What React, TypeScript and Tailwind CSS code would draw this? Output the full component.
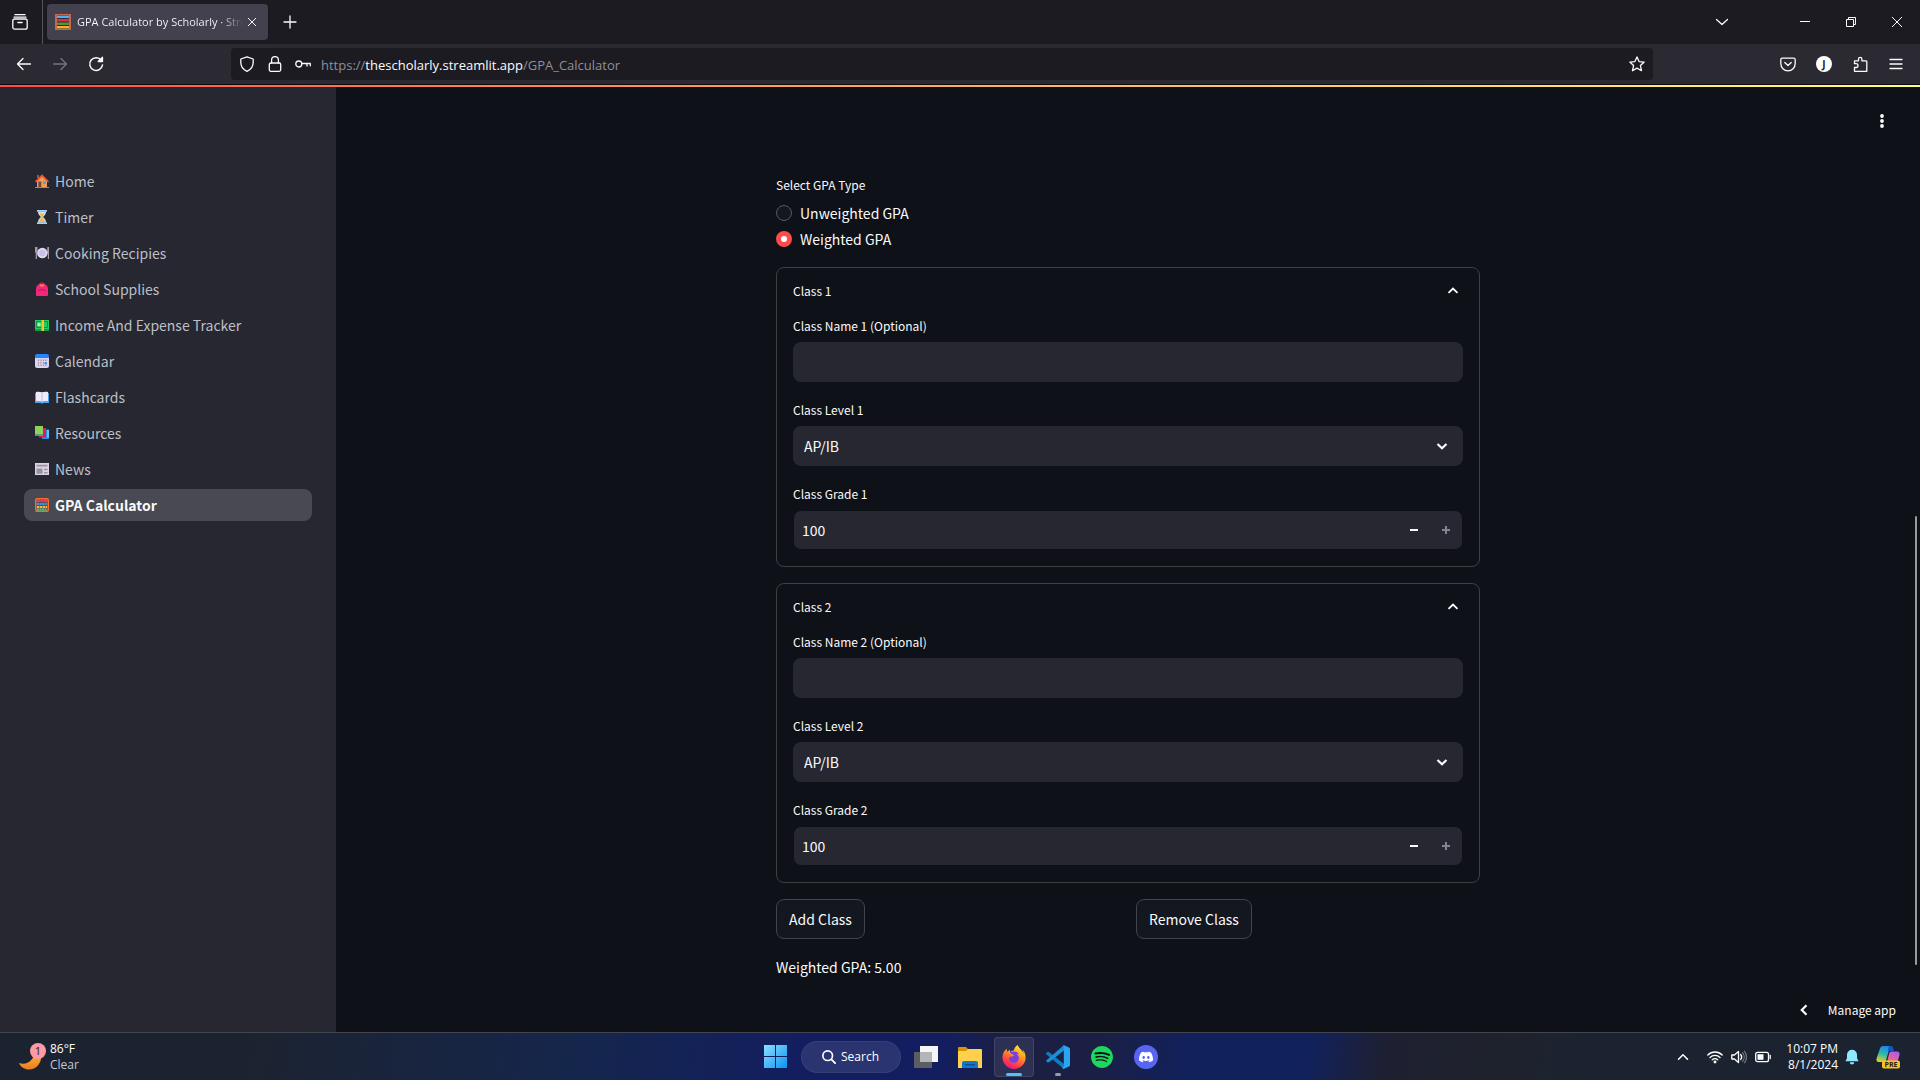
import * as React from "react"
import { SiDiscord, SiFirefoxbrowser, SiSpotify } from "react-icons/si"

type Page = { name: string; slug: string; icon: React.ReactNode }

const pages: Page[] = [
	{
		name: "Home",
		slug: "/",
		icon: (
			<>
				<path d="M2 1h2v3H2z" fill="#8a5a44" />
				<path d="M2 6.500 7 2l5 4.500V13H2z" fill="#e8a05c" />
				<path d="M0 7.300 7 .3l7 7-1 1.100L7 3 1 8.400z" fill="#f4552f" />
				<path d="M3.300 7.500h3V13h-3z" fill="#7d4533" />
				<path d="M8 7.300h3v2.700H8z" fill="#3fa9f5" />
				<path d="M0 13h14v1H0z" fill="#3fbf62" />
			</>
		),
	},
	{
		name: "Timer",
		slug: "/Timer",
		icon: (
			<>
				<path d="M3 1.500h8c0 3-1.500 4-3 5.500 1.500 1.500 3 2.500 3 5.500H3c0-3 1.500-4 3-5.500C4.500 5.500 3 4.500 3 1.500" fill="#c9e4f5" />
				<path d="M4.500 3.500h5C9 5 8 5.500 7.500 7c.5 1.500 2.300 2.500 2.500 5H4c.2-2.500 2-3.500 2.500-5C6 5.500 5 5 4.500 3.500" fill="#fbb64b" />
				<path d="M2 0h10v1.800H2zM2 12.200h10V14H2z" fill="#a9cfea" />
			</>
		),
	},
	{
		name: "Cooking Recipies",
		slug: "/Cooking_Recipies",
		icon: (
			<>
				<path d="M0 1h2.500v5L2 7v6H.7V7L0 6zM12.300 1H14v12h-1.200V8h-.8z" fill="#a39aa9" />
				<circle cx="7.300" cy="7" r="5.200" fill="#e1d8ee" />
				<circle cx="7.300" cy="7" r="3.300" fill="#cdc0ec" />
			</>
		),
	},
	{
		name: "School Supplies",
		slug: "/School_Supplies",
		icon: (
			<>
				<path d="M5 2C5-.2 9-.2 9 2" fill="none" stroke="#c21858" />
				<path d="M1 7.500C1 4 3 1.500 7 1.500s6 2.500 6 6V13a1 1 0 0 1-1 1H2a1 1 0 0 1-1-1z" fill="#f4267c" />
				<path d="M4.500 2.500h5L8.500 4.500h-3z" fill="#f8932c" />
				<path d="M3 9c2-1.800 6-1.800 8 0" fill="none" stroke="#b81457" />
			</>
		),
	},
	{
		name: "Income And Expense Tracker",
		slug: "/Income_And_Expense_Tracker",
		icon: (
			<>
				<path d="M0 2h14v11H0z" fill="#169a46" />
				<path d="M0 2h14v9H0z" fill="#25cb5e" />
				<path d="M1.500 3.500h11v6h-11z" fill="none" stroke="#139147" />
				<circle cx="4" cy="6.500" r="1.800" fill="#b8e8c4" />
				<path d="M6.500 2h2.500v11H6.500z" fill="#fbc22d" />
			</>
		),
	},
	{
		name: "Calendar",
		slug: "/Calendar",
		icon: (
			<>
				<path d="M0 3h14v9a2 2 0 0 1-2 2H2a2 2 0 0 1-2-2z" fill="#ded3ed" />
				<path d="M2 0h10a2 2 0 0 1 2 2v2H0V2a2 2 0 0 1 2-2" fill="#2583fb" />
				<path d="M3.500 5.500v7M6 5.500v7M8.500 5.500v7M11 5.500v7" stroke="#9c8fac" strokeWidth="1.200" strokeDasharray="1.500 1" />
				<path d="M9.500 8.300h2.300v2H9.500z" fill="#218cf4" />
			</>
		),
	},
	{
		name: "Flashcards",
		slug: "/Flashcards",
		icon: (
			<>
				<path d="M0 3h14v10H8.500L7 13.800 5.500 13H0z" fill="#4ba5e8" />
				<path d="M1 2c2-.5 4-.3 6 .3 2-.6 4-.8 6-.3v9.300c-2-.5-4-.3-6 .3-2-.6-4-.8-6-.3z" fill="#f0eafa" />
				<path d="M7 2.300v9.300" stroke="#c8bedd" />
			</>
		),
	},
	{
		name: "Resources",
		slug: "/Resources",
		icon: (
			<>
				<path d="M6 3.500h8V13H7z" fill="#2b8be8" />
				<path d="M12 4h2v7.500h-2z" fill="#5bc5ff" />
				<path d="M3 2h8v9.500H4z" fill="#d72250" />
				<path d="M0 0h8v9.500H0z" fill="#8cd459" />
				<path d="M0 8h8v1.700H0z" fill="#56a27b" />
			</>
		),
	},
	{
		name: "News",
		slug: "/News",
		icon: (
			<>
				<path d="M0 1h14v12H0z" fill="#dcd3e2" />
				<path d="M1.500 2.800h11v1.700h-11zM1.500 6.500h6v5.300h-6zM9 6.800h3.500v1.400H9zM9 10h3.500v1.400H9z" fill="#9a919f" />
			</>
		),
	},
	{
		name: "GPA Calculator",
		slug: "/GPA_Calculator",
		icon: (
			<>
				<rect x=".7" y=".7" width="12.600" height="12.600" rx="1.300" fill="#57505c" stroke="#f1702f" strokeWidth="1.400" />
				<path d="M2 3h10" stroke="#f0395f" strokeWidth="2" strokeDasharray="3 .5" />
				<path d="M2 6h10" stroke="#3b99f4" strokeWidth="2" strokeDasharray="2 .5" />
				<path d="M2 9h10" stroke="#fbb62d" strokeWidth="2" strokeDasharray="2.500 .5" />
				<path d="M2 11.500h10" stroke="#3fd072" strokeWidth="2" strokeDasharray="2 .5" />
			</>
		),
	},
]

type IconProps = {
	className?: string
	children: React.ReactNode
}

function Icon({ className = "size-4", children }: IconProps) {
	return (
		<svg
			viewBox="0 0 16 16"
			fill="none"
			stroke="currentColor"
			strokeWidth="1.3"
			strokeLinecap="round"
			strokeLinejoin="round"
			aria-hidden="true"
			className={`shrink-0 ${className}`}
		>
			{children}
		</svg>
	)
}

function TabStrip() {
	return (
		<div className="flex h-11 items-center bg-[#1c1b22] text-[#fbfbfe]">
			<button aria-label="Firefox View" className="flex h-full w-[43px] items-center border-r border-[#54535c] pl-3">
				<Icon className="size-4">
					<path d="M3 .7h10M2 3.200h12" />
					<rect x=".8" y="5" width="14.400" height="10.200" rx="2" />
					<path d="M6 8.500h4" strokeWidth="1.600" />
				</Icon>
			</button>
			<div className="ml-1 flex h-9 w-[221px] items-center rounded bg-[#42414d] pr-2 pl-2 shadow-sm">
				<svg viewBox="0 0 16 16" className="size-4 shrink-0" aria-hidden="true">
					<path d="M0 0h16v16H0z" fill="#c1694f" />
					<path d="M2 1h12v14H2z" fill="#292f33" />
					<path d="M2 1.500h12v2.500H2z" fill="#55acee" />
					<path d="M2 5h12v2.500H2z" fill="#dd2e44" />
					<path d="M2 8.500h12V11H2z" fill="#5c913b" />
					<path d="M2 12h12v2.500H2z" fill="#ffac33" />
				</svg>
				<span className="ml-1.5 min-w-0 flex-1 overflow-hidden bg-linear-to-r from-[#fbfbfe] from-86% to-[#42414d] bg-clip-text font-['Open_Sans',sans-serif] text-[11px] whitespace-nowrap text-transparent">
					GPA Calculator by Scholarly · Streamlit
				</span>
				<button aria-label="Close tab" className="flex w-4 justify-center">
					<Icon className="size-3">
						<path d="m3 3 10 10M13 3 3 13" />
					</Icon>
				</button>
			</div>
			<button aria-label="New tab" className="ml-[14px] flex w-4 justify-center">
				<Icon className="size-4">
					<path d="M8 2v12M2 8h12" />
				</Icon>
			</button>
			<button aria-label="List all tabs" className="mr-[52px] ml-auto flex w-4 justify-center">
				<Icon className="size-4">
					<path d="m2.500 5.500 5.500 5 5.500-5" />
				</Icon>
			</button>
			<button aria-label="Minimize" className="flex h-full w-[46px] items-center justify-center">
				<svg viewBox="0 0 10 10" className="size-2.5" stroke="currentColor" aria-hidden="true">
					<path d="M0 4.500h10" />
				</svg>
			</button>
			<button aria-label="Restore" className="flex h-full w-[46px] items-center justify-center">
				<svg viewBox="0 0 10 10" className="size-2.5" fill="none" stroke="currentColor" aria-hidden="true">
					<path d="M.5 2.500h7v7h-7zM2.500 2.500v-2h7v7h-2" />
				</svg>
			</button>
			<button aria-label="Close" className="flex h-full w-[46px] items-center justify-center">
				<svg viewBox="0 0 10 10" className="size-2.5" stroke="currentColor" aria-hidden="true">
					<path d="m0 0 10 10M10 0 0 10" />
				</svg>
			</button>
		</div>
	)
}

function NavBar() {
	return (
		<div className="flex h-[41px] items-center border-b border-[#0c0c0d] bg-[#2b2a33] pl-4 text-[#fbfbfe]">
			<div className="flex items-center gap-5">
				<button aria-label="Back">
					<Icon>
						<path d="M14.500 8H1.500M7 2.500 1.500 8 7 13.500" />
					</Icon>
				</button>
				<button aria-label="Forward" disabled className="text-[#76757e]">
					<Icon>
						<path d="M1.500 8h13M9 2.500 14.500 8 9 13.500" />
					</Icon>
				</button>
				<button aria-label="Reload">
					<Icon>
						<path d="M13.300 4.200A6.400 6.400 0 1 0 14.500 9" strokeWidth="1.500" />
						<path d="M14.500 1.200v4.300h-4.300z" fill="currentColor" />
					</Icon>
				</button>
			</div>

			<div className="ml-[127px] flex h-8 flex-1 items-center rounded bg-[#1c1b22] pr-2 pl-2">
				<Icon>
					<path d="M8 .8 14.200 3v3.500c0 4-2.200 7-6.200 8.800-4-1.800-6.200-4.800-6.200-8.800V3z" />
				</Icon>
				<Icon className="ml-3 size-4">
					<rect x="2.300" y="7" width="11.400" height="8.300" rx="1.500" />
					<path d="M4.600 7V4a3.400 3.400 0 0 1 6.800 0v3" />
				</Icon>
				<Icon className="ml-3 size-4">
					<circle cx="3.800" cy="8" r="3" />
					<path d="M7 7.500h8.300v2.300M12 7.500V10" />
				</Icon>
				<div
					role="textbox"
					aria-label="Address"
					className="ml-2.5 flex-1 pt-0.5 font-['Open_Sans',sans-serif] text-[13px] text-[#8f8f96]"
				>
					https://<span className="text-[#fbfbfe]">thescholarly.streamlit.app</span>/GPA_Calculator
				</div>
				<button aria-label="Bookmark this page">
					<Icon>
						<path d="m8 .9 2.100 4.700 5.100.5-3.800 3.500 1.100 5.100L8 12.100l-4.500 2.600 1.100-5.100L.8 6.100l5.100-.5z" />
					</Icon>
				</button>
			</div>

			<div className="mr-4 ml-[127px] flex items-center gap-5">
				<button aria-label="Save to Pocket">
					<Icon>
						<path d="M2.200 2.200h11.600a1.400 1.400 0 0 1 1.400 1.400v4a7.200 7.200 0 0 1-14.400 0v-4a1.400 1.400 0 0 1 1.400-1.400" />
						<path d="M4.800 6.500 8 9.500l3.200-3" />
					</Icon>
				</button>
				<button
					aria-label="Account"
					className="flex size-4 items-center justify-center rounded-full bg-white font-['Open_Sans',sans-serif] text-[10px] leading-4 font-bold text-[#1c1b22]"
				>
					J
				</button>
				<button aria-label="Extensions">
					<Icon>
						<path d="M2.500 15.300v-3.800h1.600a1.900 1.900 0 0 0 0-3.800H2.500V4.800h4V3a1.700 1.700 0 0 1 3.400 0v1.800h4a.9.9 0 0 1 .9.900v9.600z" />
					</Icon>
				</button>
				<button aria-label="Open application menu">
					<Icon>
						<path d="M2 3.500h12M2 8h12M2 12.500h12" />
					</Icon>
				</button>
			</div>
		</div>
	)
}

function Sidebar() {
	return (
		<nav aria-label="Pages" className="w-84 shrink-0 bg-[#262730] px-6 pt-20">
			<ul className="space-y-1">
				{pages.map((page) => {
					const active = page.name === "GPA Calculator"
					return (
						<li key={page.slug}>
							<a
								href={page.slug}
								aria-current={active ? "page" : undefined}
								className={
									active
										? "flex h-8 items-center gap-1.5 rounded-lg bg-[#484953] px-[11px] font-bold text-[#fafafa]"
										: "flex h-8 items-center gap-1.5 rounded-lg px-[11px] text-[#bcbfc9]"
								}
							>
								<svg viewBox="0 0 14 14" className="size-3.5 shrink-0" aria-hidden="true">
									{page.icon}
								</svg>
								{page.name}
							</a>
						</li>
					)
				})}
			</ul>
		</nav>
	)
}

function Field({ id, label, children }: { id: string; label: string; children: React.ReactNode }) {
	return (
		<div>
			<label htmlFor={id} className="mb-1 flex h-6 items-center text-xs">
				{label}
			</label>
			{children}
		</div>
	)
}

function ClassCard({ n }: { n: number }) {
	const [open, setOpen] = React.useState(true)
	const [grade, setGrade] = React.useState(100)

	return (
		<section className="rounded-lg border border-[#3d4044] px-4">
			<button
				aria-expanded={open}
				onClick={() => setOpen(!open)}
				className="flex h-[46px] w-full items-center justify-between text-xs"
			>
				Class {n}
				<Icon className="mr-0.5 size-4">
					<path d="M3.500 9.800 8 5.500l4.500 4.300" strokeWidth="1.800" strokeLinecap="butt" strokeLinejoin="miter" />
				</Icon>
			</button>
			{open && (
				<div className="space-y-4 pb-4">
					<Field id={`name-${n}`} label={`Class Name ${n} (Optional)`}>
						<input
							id={`name-${n}`}
							type="text"
							className="block h-10 w-full rounded-lg bg-[#262730] px-2.5 outline-none"
						/>
					</Field>
					<Field id={`level-${n}`} label={`Class Level ${n}`}>
						<div className="relative">
							<select
								id={`level-${n}`}
								defaultValue="AP/IB"
								className="block h-10 w-full appearance-none rounded-lg bg-[#262730] px-[11px] outline-none"
							>
								<option>AP/IB</option>
								<option>Honors</option>
								<option>Regular</option>
							</select>
							<Icon className="pointer-events-none absolute top-3 right-[13px] size-4">
								<path d="M3.500 6 8 10.300 12.500 6" strokeWidth="2.200" strokeLinecap="butt" strokeLinejoin="miter" />
							</Icon>
						</div>
					</Field>
					<Field id={`grade-${n}`} label={`Class Grade ${n}`}>
						<div className="flex h-10 overflow-hidden rounded-lg border border-transparent bg-[#262730] bg-clip-padding">
							<input
								id={`grade-${n}`}
								type="number"
								value={grade}
								onChange={(e) => setGrade(Number(e.currentTarget.value))}
								className="min-w-0 flex-1 appearance-none px-2 outline-none [appearance:textfield]"
							/>
							<button
								aria-label="Decrease"
								onClick={() => setGrade(grade - 1)}
								className="flex w-8 items-center justify-center"
							>
								<svg viewBox="0 0 8 8" className="size-2" stroke="currentColor" strokeWidth="2" aria-hidden="true">
									<path d="M0 4h8" />
								</svg>
							</button>
							<button
								aria-label="Increase"
								disabled={grade >= 100}
								onClick={() => setGrade(grade + 1)}
								className="flex w-8 items-center justify-center disabled:text-[#808495]"
							>
								<svg viewBox="0 0 8 8" className="size-2" stroke="currentColor" strokeWidth="2" aria-hidden="true">
									<path d="M0 4h8M4 0v8" />
								</svg>
							</button>
						</div>
					</Field>
				</div>
			)}
		</section>
	)
}

function Calculator() {
	return (
		<main className="relative min-w-0 flex-1">
			<div className="mx-auto w-full max-w-[704px] pt-22">
				<fieldset>
					<legend className="flex h-6 items-center text-xs">Select GPA Type</legend>
					<div className="mt-1 flex flex-col gap-0.5">
						{["Unweighted GPA", "Weighted GPA"].map((type) => (
							<label key={type} className="flex h-6 items-center gap-2">
								<input
									type="radio"
									name="gpa-type"
									defaultChecked={type === "Weighted GPA"}
									className="size-4 appearance-none rounded-full border border-[#565960] bg-[#131720] checked:border-5 checked:border-[#ff4b4b] checked:bg-white"
								/>
								{type}
							</label>
						))}
					</div>
				</fieldset>

				<div className="mt-4 space-y-4">
					<ClassCard n={1} />
					<ClassCard n={2} />
				</div>

				<div className="mt-4 grid grid-cols-2 gap-4">
					<div>
						<button className="h-10 rounded-lg border border-[#41444c] bg-[#131720] px-3">Add Class</button>
					</div>
					<div>
						<button className="h-10 rounded-lg border border-[#41444c] bg-[#131720] px-3">Remove Class</button>
					</div>
				</div>

				<p className="mt-4 leading-6">Weighted GPA: 5.00</p>
			</div>

			<button aria-label="Main menu" className="absolute top-7 right-[30px]">
				<svg viewBox="0 0 16 16" className="size-4" fill="currentColor" aria-hidden="true">
					<circle cx="8" cy="3" r="1.900" />
					<circle cx="8" cy="8" r="1.900" />
					<circle cx="8" cy="13" r="1.900" />
				</svg>
			</button>
			<button className="absolute right-6 bottom-2.5 flex items-center gap-4 text-xs leading-6">
				<Icon className="size-4">
					<path d="M10.500 3.300 5.800 8l4.700 4.700" strokeWidth="2.200" strokeLinecap="butt" strokeLinejoin="miter" />
				</Icon>
				Manage app
			</button>
			<div className="absolute right-[3px] bottom-[67px] h-[449px] w-0.5 rounded-full bg-[#9a9b9f]" />
		</main>
	)
}

function TaskButton({
	label,
	active,
	running,
	children,
}: {
	label: string
	active?: boolean
	running?: boolean
	children: React.ReactNode
}) {
	return (
		<button
			aria-label={label}
			className={
				active
					? "relative flex size-10 items-center justify-center rounded border border-white/10 bg-white/8"
					: "relative flex size-10 items-center justify-center"
			}
		>
			{children}
			{active && <span className="absolute bottom-0 h-[3px] w-4 rounded-full bg-[#4cc2ff]" />}
			{running && <span className="absolute bottom-px h-[3px] w-1.5 rounded-full bg-[#9a9da8]" />}
		</button>
	)
}

function Taskbar() {
	return (
		<footer className="grid h-12 grid-cols-[1fr_auto_1fr] items-center border-t border-[#42454d] bg-[linear-gradient(100deg,#1c2330_13%,#15264c_30%,#121e60_42%,#121e60_49%,#1b1f44_52%,#1b1f44_57%,#11215c_62%,#11215c_68%,#1e2032_72%,#1e222c_77%,#1c2330_82%)] font-['Open_Sans',sans-serif] text-xs text-white">
			<button className="flex items-center gap-1 pl-[19px] text-left">
				<svg viewBox="0 0 27 28" className="h-7 w-[27px]" aria-hidden="true">
					<defs>
						<linearGradient id="moon" x1="0" y1="0" x2="0" y2="1">
							<stop offset="0" stopColor="#fbc53a" />
							<stop offset="1" stopColor="#ee7b20" />
						</linearGradient>
					</defs>
					<path d="M16 6c6 2 8 9 4 15-5 8-17 7-20-1 8 3 16-3 16-14" fill="url(#moon)" />
					<circle cx="19" cy="8" r="8" fill="#ff99a4" />
					<text x="19" y="12" textAnchor="middle" fontSize="11" fill="#1a1a1a">
						1
					</text>
				</svg>
				<span className="leading-4">
					<span className="block">86°F</span>
					<span className="block text-[#c5c8cd]">Clear</span>
				</span>
			</button>

			<div className="flex items-center gap-1 pl-px">
				<TaskButton label="Start">
					<svg viewBox="0 0 23 23" className="size-[23px]" aria-hidden="true">
						<defs>
							<linearGradient id="win" x1="0" y1="0" x2="1" y2="1">
								<stop offset="0" stopColor="#8be0ff" />
								<stop offset="1" stopColor="#0a94f5" />
							</linearGradient>
						</defs>
						<path d="M0 0h11v11H0zM12 0h11v11H12zM0 12h11v11H0zM12 12h11v11H12z" fill="url(#win)" />
					</svg>
				</TaskButton>
				<button className="mx-px flex h-8 w-25 items-center justify-center gap-[5px] rounded-full border border-white/5 bg-white/10">
					<Icon className="size-3.5">
						<circle cx="6.500" cy="6.500" r="5.500" strokeWidth="1.900" />
						<path d="m10.700 10.700 4.300 4.300" strokeWidth="2.100" />
					</Icon>
					Search
				</button>
				<TaskButton label="Task view">
					<svg viewBox="0 0 24 24" className="size-6" aria-hidden="true">
						<path d="M0 7h18v16H0z" fill="#5c5d60" />
						<path d="M6 1h18v16H6z" fill="#f5f5f6" />
						<path d="M6 7h12v10H6z" fill="#b4b5b8" />
					</svg>
				</TaskButton>
				<TaskButton label="File Explorer">
					<svg viewBox="0 0 24 24" className="size-6" aria-hidden="true">
						<path d="M0 3a1 1 0 0 1 1-1h7l2 2v4H0z" fill="#d99200" />
						<path d="M0 6h8l2-2h13a1 1 0 0 1 1 1v18H0z" fill="#ffd04c" />
						<path d="M4 23v-5a2 2 0 0 1 2-2h12a2 2 0 0 1 2 2v5z" fill="#1277cc" />
						<path d="M7 19h10v1.500H7z" fill="#0b5196" />
					</svg>
				</TaskButton>
				<TaskButton label="Firefox" active>
					<svg width="0" height="0" className="absolute" aria-hidden="true">
						<defs>
							<linearGradient id="fox" x1="0.8" y1="0" x2="0.3" y2="1">
								<stop offset="0" stopColor="#fff13a" />
								<stop offset="0.4" stopColor="#ff9a1f" />
								<stop offset="0.750" stopColor="#ff3d4b" />
								<stop offset="1" stopColor="#e3148c" />
							</linearGradient>
						</defs>
					</svg>
					<span className="flex size-6 items-center justify-center rounded-full bg-[radial-gradient(circle,#7a3fe0_35%,transparent_45%)]">
						<SiFirefoxbrowser className="size-6" style={{ fill: "url(#fox)" }} />
					</span>
				</TaskButton>
				<TaskButton label="Visual Studio Code" running>
					<svg viewBox="0 0 24 24" className="size-6" aria-hidden="true">
						<path d="M0 8.300 1.700 6.800 3 7l15 12v5L.2 9.200z" fill="#0b7cc4" />
						<path d="M0 15.700 18 0v5.500L3 17.200l-1.300.2L0 16z" fill="#1b8fd8" />
						<path d="M17.500 0 23 2.500a2 2 0 0 1 1 1.600v15.800a2 2 0 0 1-1 1.600L17.500 24c-.8-.2-1-.8-1-1.500l1.300-1V3z" fill="#2aa5f2" />
					</svg>
				</TaskButton>
				<TaskButton label="Spotify">
					<span className="rounded-full bg-[#121212]">
						<SiSpotify className="size-[22px] text-[#1ed760]" />
					</span>
				</TaskButton>
				<TaskButton label="Discord">
					<span className="flex size-6 items-center justify-center rounded-full bg-[#5865f2]">
						<SiDiscord className="size-3.5" />
					</span>
				</TaskButton>
			</div>

			<div className="flex items-center justify-end pr-5">
				<button aria-label="Show hidden icons">
					<Icon className="size-4">
						<path d="m3.500 10.300 4.500-4.500 4.500 4.500" strokeWidth="1.500" />
					</Icon>
				</button>
				<button aria-label="Network, volume and battery" className="ml-4 flex gap-2">
					<Icon>
						<path d="M.8 6a10.200 10.200 0 0 1 14.400 0M3 8.500a7 7 0 0 1 10 0M5.200 10.900a4 4 0 0 1 5.600 0" />
						<circle cx="8" cy="13" r=".8" fill="currentColor" />
					</Icon>
					<Icon>
						<path d="M.8 6v4h2.600L7.500 13.500v-11L3.400 6zM9.700 5.500a4 4 0 0 1 0 5" />
						<path d="M11.600 3.800a6.300 6.300 0 0 1 0 8.400M13.500 2.300a9 9 0 0 1 0 11.400" stroke="#6d727c" />
					</Icon>
					<Icon>
						<rect x=".7" y="3.300" width="12.800" height="9.400" rx="2" />
						<path d="M2.500 5.200h6v5.600h-6z" fill="currentColor" stroke="none" />
						<path d="M15.200 6.500v3" />
					</Icon>
				</button>
				<button className="ml-[15px] text-right leading-4">
					<span className="block">10:07 PM</span>
					<span className="block">8/1/2024</span>
				</button>
				<button aria-label="Notifications" className="ml-1.5">
					<svg viewBox="0 0 16 16" className="size-4" fill="#8fe6ff" aria-hidden="true">
						<path d="M8 .8a5 5 0 0 1 5 5v3.500l1.700 2.900H1.300L3 9.300V5.800a5 5 0 0 1 5-5M5.800 13.200h4.400a2.200 2.200 0 0 1-4.400 0" />
					</svg>
				</button>
				<button aria-label="Copilot" className="ml-4">
					<svg viewBox="0 0 24 24" className="size-6" aria-hidden="true">
						<defs>
							<linearGradient id="copilot-a" x1="0.5" y1="0" x2="0.2" y2="1">
								<stop offset="0" stopColor="#1b86e8" />
								<stop offset="0.5" stopColor="#2fb9a9" />
								<stop offset="1" stopColor="#f2d11c" />
							</linearGradient>
							<linearGradient id="copilot-b" x1="0.8" y1="0" x2="0.2" y2="1">
								<stop offset="0" stopColor="#a45cf0" />
								<stop offset="1" stopColor="#fb6a80" />
							</linearGradient>
						</defs>
						<path d="M7 1h7c2 0 3 1.500 3.500 4H13l-3.500 12H3c-2.500 0-3-2-2.300-4L4 3.500C4.500 2 5.500 1 7 1" fill="url(#copilot-a)" />
						<path d="M14 1c2 0 3 1.500 3.500 5H12c.5-3 .5-5 2-5" fill="#1454c8" />
						<path d="M15.500 6.500H21c2.500 0 3 2 2.400 4l-2 6.500H11l2-8c.4-1.700 1-2.500 2.500-2.500" fill="url(#copilot-b)" />
						<rect x="6" y="15.500" width="18" height="8" rx="2" fill="#fcc419" />
						<text x="15" y="22.200" textAnchor="middle" fontSize="7" fontWeight="700" fill="#222">
							PRE
						</text>
					</svg>
				</button>
			</div>
		</footer>
	)
}

export default function App() {
	return (
		<div className="flex min-h-screen flex-col bg-[#0e1117] font-['Noto_Sans_CJK_SC',sans-serif] text-sm text-[#fafafa]">
			<header>
				<TabStrip />
				<NavBar />
			</header>
			<div className="relative flex flex-1">
				<div className="absolute inset-x-0 top-0 z-10 h-0.5 bg-linear-to-r from-[#ff4b4b] to-[#fffd80]" />
				<Sidebar />
				<Calculator />
			</div>
			<Taskbar />
		</div>
	)
}
